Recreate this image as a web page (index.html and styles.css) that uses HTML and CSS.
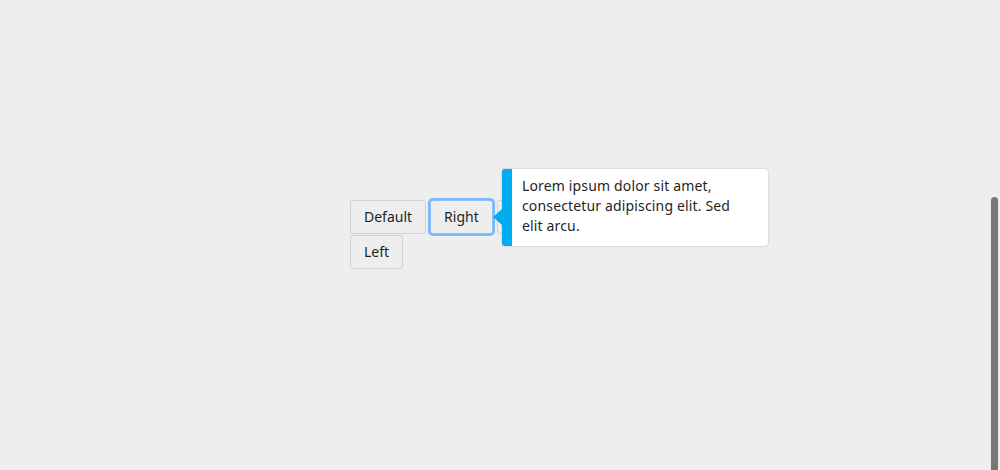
FILE: index.html
```html
<!DOCTYPE html>
<html>
<head>
<meta charset="utf-8">
<link rel="stylesheet" href="styles.css">
</head>
<body>
<div class="stage">
  <div class="buttons">
    <button class="btn">Default</button>
    <button class="btn focused">Right</button>
    <button class="btn hidden-btn" aria-label="Bottom"></button>
    <button class="btn">Left</button>
    <div class="tooltip">
      <span class="arrow"></span>
      <p class="tip-text">Lorem ipsum dolor sit amet, consectetur adipiscing elit. Sed elit arcu.</p>
    </div>
  </div>
</div>
<div class="scrollbar"></div>
</body>
</html>
```

FILE: styles.css
```css
html, body {
  margin: 0;
  padding: 0;
  height: 100%;
  overflow: hidden;
}
body {
  background: #eeeeee;
  font-family: "Noto Sans", "Open Sans", sans-serif;
  color: #222;
}
.stage {
  padding: 200px 0 0 350px;
}
.buttons {
  position: relative;
  display: flex;
  flex-wrap: wrap;
  column-gap: 4px;
  row-gap: 1px;
  width: 230px;
}
.btn {
  font-family: inherit;
  font-size: 14px;
  line-height: 20px;
  height: 34px;
  padding: 6px 13px;
  background: #eeeeee;
  color: #1f1f24;
  border: 1px solid #d2d2d2;
  border-radius: 3px;
}
.hidden-btn {
  width: 70px;
}
.btn.focused {
  border-color: #8dc0fa;
  box-shadow: 0 0 0 2px #7db7fb;
}
.tooltip {
  position: absolute;
  left: 152px;
  top: -31px;
  width: 266px;
  height: 77px;
  box-sizing: border-box;
  background: #fff;
  border-left: 10px solid #00aeef;
  border-radius: 3px;
  box-shadow: 0 0 2px rgba(0, 0, 0, 0.25);
  padding: 7px 20px 0 10px;
}
.arrow {
  position: absolute;
  left: -19px;
  top: 40px;
  width: 0;
  height: 0;
  border-top: 8px solid transparent;
  border-bottom: 8px solid transparent;
  border-right: 9px solid #00aeef;
}
.tip-text {
  margin: 0;
  font-size: 14px;
  letter-spacing: 0.15px;
  line-height: 20px;
  color: #1f1f24;
}
.scrollbar {
  position: absolute;
  left: 991px;
  top: 197px;
  width: 7px;
  height: 280px;
  background: #777;
  border-radius: 4px 4px 0 0;
}
```
